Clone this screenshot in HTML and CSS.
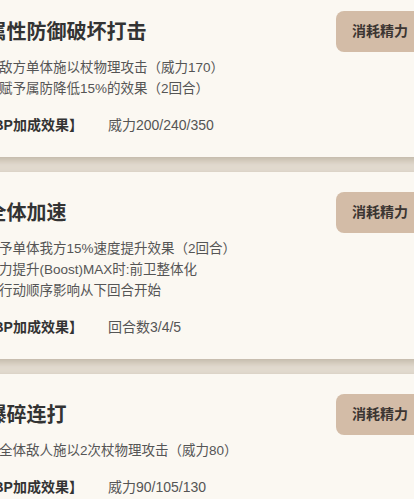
FILE: index.html
```html
<!DOCTYPE html>
<html lang="zh-CN">
<head>
  <meta charset="UTF-8">
  <meta name="viewport" content="width=device-width, initial-scale=1.0">
  <title>技能一览</title>
  <link rel="stylesheet" href="styles.css">
</head>
<body>

  <div class="skill-list">

    <div class="skill-card">
      <div class="skill-head">
        <h3 class="skill-name">属性防御破坏打击</h3>
        <span class="cost">消耗精力</span>
      </div>
      <div class="skill-desc">
        <p>对敌方单体施以杖物理攻击（威力170）</p>
        <p>并赋予属防降低15%的效果（2回合）</p>
      </div>
      <div class="boost">
        <span class="boost-label">【BP加成效果】</span>
        <span class="boost-value">威力200/240/350</span>
      </div>
    </div>

    <div class="skill-card">
      <div class="skill-head">
        <h3 class="skill-name">全体加速</h3>
        <span class="cost">消耗精力</span>
      </div>
      <div class="skill-desc">
        <p>赋予单体我方15%速度提升效果（2回合）</p>
        <p>能力提升(Boost)MAX时:前卫整体化</p>
        <p>※行动顺序影响从下回合开始</p>
      </div>
      <div class="boost">
        <span class="boost-label">【BP加成效果】</span>
        <span class="boost-value">回合数3/4/5</span>
      </div>
    </div>

    <div class="skill-card">
      <div class="skill-head">
        <h3 class="skill-name">爆碎连打</h3>
        <span class="cost">消耗精力</span>
      </div>
      <div class="skill-desc">
        <p>对全体敌人施以2次杖物理攻击（威力80）</p>
      </div>
      <div class="boost">
        <span class="boost-label">【BP加成效果】</span>
        <span class="boost-value">威力90/105/130</span>
      </div>
    </div>

  </div>

</body>
</html>
```

FILE: styles.css
```css
body {
  margin: 0;
  padding: 0;
  background-color: #e7e0d5;
  font-family: "Liberation Sans", "Noto Sans CJK SC", sans-serif;
  overflow: hidden;
}

.skill-list {
  width: 480px;
  margin: -9px 0 0 -40px;
  display: flex;
  flex-direction: column;
  gap: 15px;
}

.skill-card {
  background-color: #fbf8f2;
  padding: 20px 16px 21px 25.5px;
  box-shadow: 0 3px 9px rgba(90, 70, 40, 0.3);
}

.skill-head {
  display: flex;
  align-items: center;
  justify-content: space-between;
}

.skill-name {
  margin: 0 0 0 1px;
  font-size: 20px;
  line-height: 28px;
  font-weight: bold;
  color: #333;
}

.cost {
  background-color: #d3bca7;
  color: #3b3532;
  font-size: 14px;
  font-weight: bold;
  line-height: 41px;
  padding: 0 16px;
  border-radius: 8px;
}

.skill-desc {
  margin-top: 5px;
}

.skill-desc p {
  margin: 0;
  font-size: 13.5px;
  line-height: 21px;
  color: #555;
}

.boost {
  margin-top: 16px;
  display: flex;
  align-items: center;
  gap: 25px;
  line-height: 21px;
}

.boost-label {
  margin-left: -6px;
  font-size: 14px;
  font-weight: bold;
  color: #333;
}

.boost-value {
  font-size: 14px;
  color: #555;
}
```
